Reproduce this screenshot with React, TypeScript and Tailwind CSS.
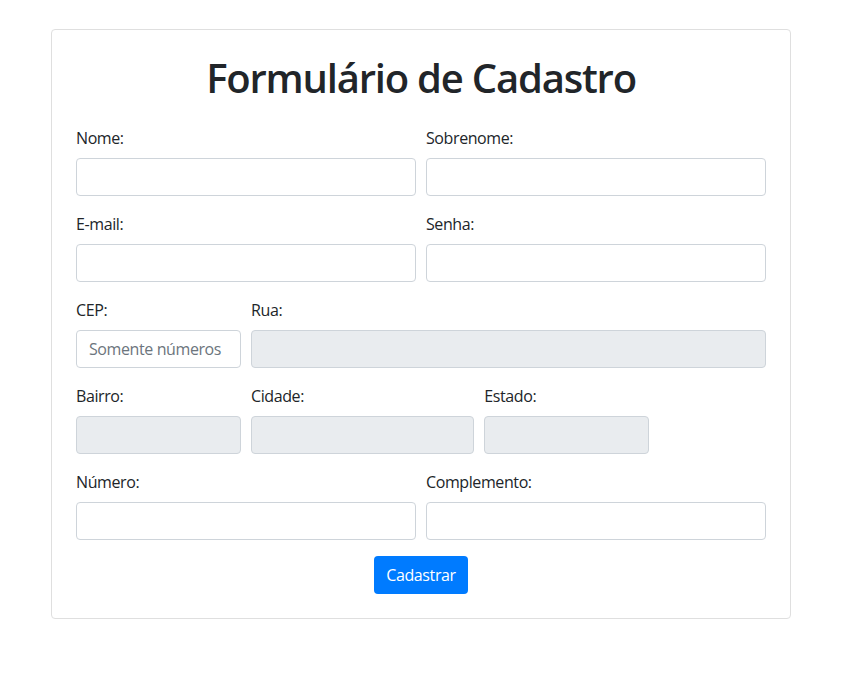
const font = { fontFamily: '"Open Sans", "Noto Sans", sans-serif' }

function Field({ label, span, disabled, placeholder }: { label: string; span: string; disabled?: boolean; placeholder?: string }) {
  return (
    <div className={`${span} px-[5px] mb-4`}>
      <label className="block mb-2 text-[16px] leading-6 tracking-[-0.4px] text-[#212529]">{label}</label>
      <input
        type="text"
        disabled={disabled}
        placeholder={placeholder}
        className={`block w-full h-[38px] px-3 rounded-[4px] border border-[#ced4da] text-[16px] tracking-[-0.4px] text-[#495057] placeholder:text-[#6c757d] outline-none ${
          disabled ? 'bg-[#e9ecef]' : 'bg-white'
        }`}
      />
    </div>
  )
}

export default function App() {
  return (
    <div className="min-h-screen bg-white pt-[29px]" style={font}>
      <div className="ml-[51px] w-[740px] border border-[#dfdfdf] rounded-[4px] p-6">
        <h1 className="text-center text-[40px] leading-[48px] font-semibold tracking-[-1.2px] text-[#212529] mb-6">
          Formulário de Cadastro
        </h1>
        <form>
          <div className="flex flex-wrap -mx-[5px]">
            <Field label="Nome:" span="w-1/2" />
            <Field label="Sobrenome:" span="w-1/2" />
          </div>
          <div className="flex flex-wrap -mx-[5px]">
            <Field label="E-mail:" span="w-1/2" />
            <Field label="Senha:" span="w-1/2" />
          </div>
          <div className="flex flex-wrap -mx-[5px]">
            <Field label="CEP:" span="w-1/4" placeholder="Somente números" />
            <Field label="Rua:" span="w-3/4" disabled />
          </div>
          <div className="flex flex-wrap -mx-[5px]">
            <Field label="Bairro:" span="w-1/4" disabled />
            <Field label="Cidade:" span="w-1/3" disabled />
            <Field label="Estado:" span="w-1/4" disabled />
          </div>
          <div className="flex flex-wrap -mx-[5px]">
            <Field label="Número:" span="w-1/2" />
            <Field label="Complemento:" span="w-1/2" />
          </div>
          <div className="flex justify-center">
            <button
              type="button"
              className="h-[38px] px-3 rounded-[4px] bg-[#007bff] text-white text-[16px] leading-6 tracking-[-0.4px]"
            >
              Cadastrar
            </button>
          </div>
        </form>
      </div>
    </div>
  )
}
